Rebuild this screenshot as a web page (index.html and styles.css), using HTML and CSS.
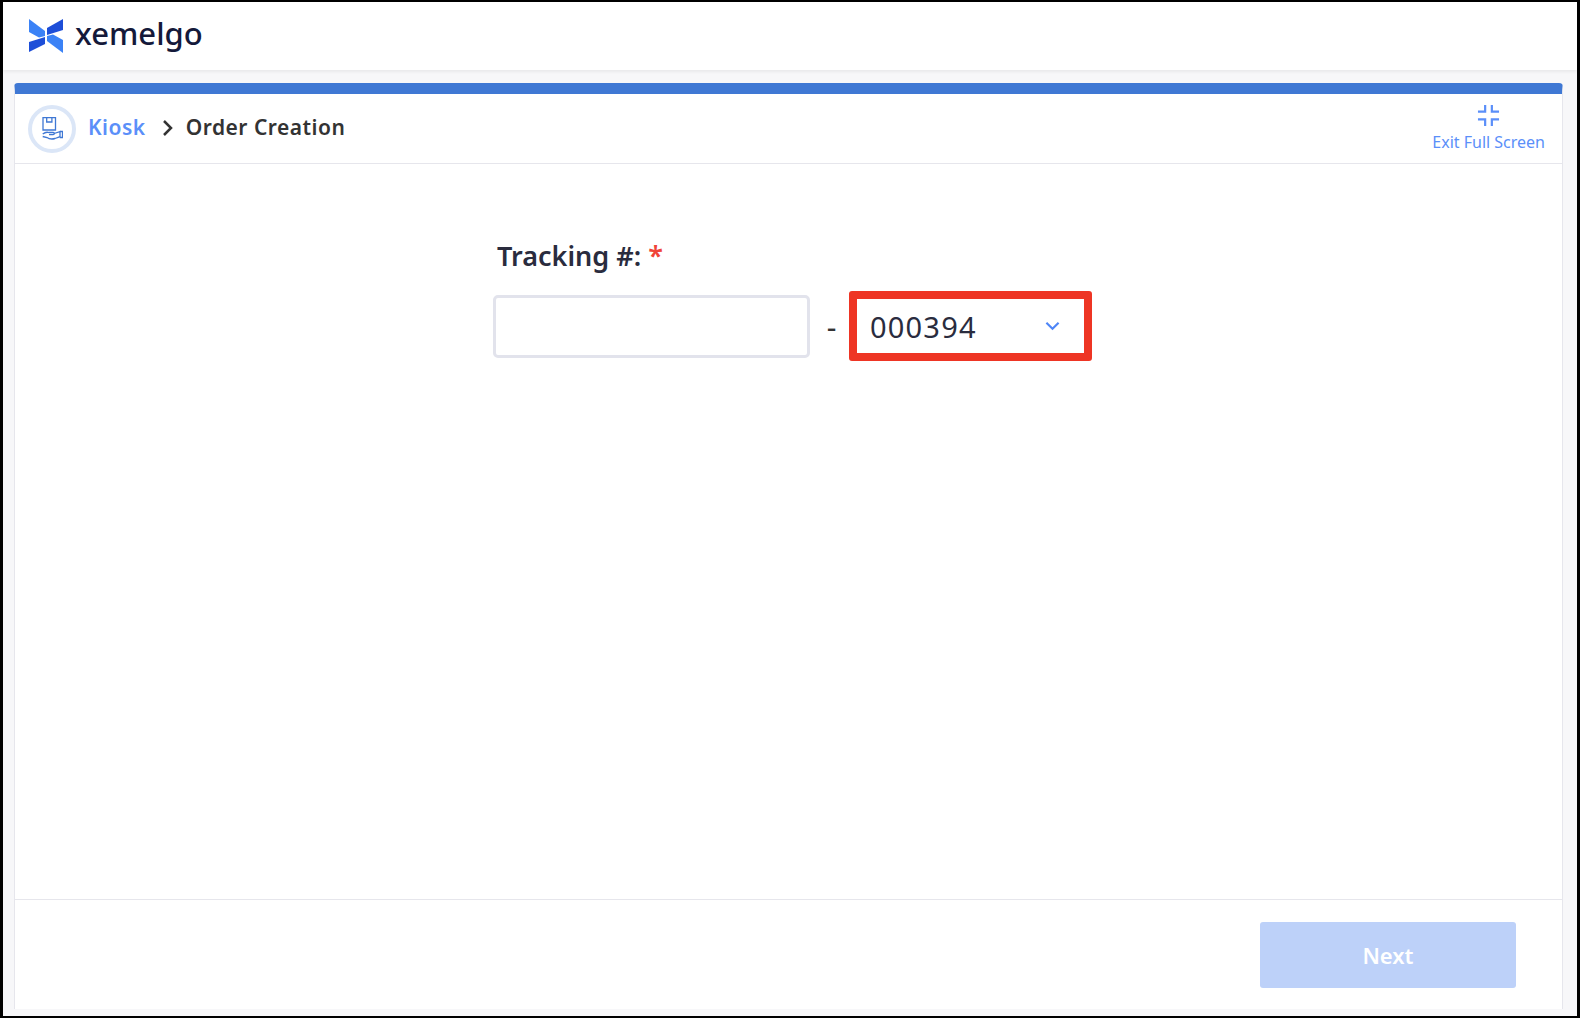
FILE: index.html
```html
<!DOCTYPE html>
<html lang="en">
<head>
    <meta charset="UTF-8">
    <title>Kiosk - Order Creation</title>
    <link rel="stylesheet" href="styles.css">
</head>
<body>

    <header class="topbar">
        <svg class="logo" viewBox="0 0 34 34">
            <polygon points="0,0 16,12 16,17 10,18.500 0,13" fill="#3b82f6"/>
            <polygon points="0,23 16,18 16,25 0,33" fill="#1d4ed8"/>
            <polygon points="34,0 34,11 18,16 18,9" fill="#1d4ed8"/>
            <polygon points="34,34 18,22 18,17 24,15.500 34,21" fill="#3b82f6"/>
        </svg>
        <span class="brand">xemelgo</span>
    </header>

    <main class="page">
        <div class="card">
            <div class="breadcrumb-row">
                <div class="kiosk-icon">
                    <svg viewBox="0 0 21 23" fill="none" stroke="#3f78d4" stroke-width="1.300">
                        <path d="M1 13V.7h12.500V13z"/>
                        <path d="M4.700.7v4.300h5.200V.7"/>
                        <path d="M.7 17c2-1.500 4-2.200 6-1.500h4.500c1.500 0 1.500 2.200 0 2.200H7"/>
                        <path d="M12 16.500l6-1.800v5l-5 1.800c-3 .8-6 .5-8-1L.7 19.500"/>
                        <path d="M17.800 14.500h2.700v6h-2.700"/>
                    </svg>
                </div>
                <a class="crumb-link">Kiosk</a>
                <svg class="crumb-sep" viewBox="0 0 12 18" fill="none" stroke="#333" stroke-width="2.500">
                    <path d="M2 2l7 7-7 7"/>
                </svg>
                <span class="crumb-current">Order Creation</span>
                <a class="exit-full">
                    <svg viewBox="0 0 24 24" fill="none" stroke="#5b8ff9" stroke-width="2.300">
                        <path d="M8.500 1v7H1"/>
                        <path d="M15.500 1v7H23"/>
                        <path d="M1 16h7.500v7"/>
                        <path d="M23 16h-7.500v7"/>
                    </svg>
                    <span>Exit Full Screen</span>
                </a>
            </div>

            <div class="content">
                <label class="field-label">Tracking #: <span class="required">*</span></label>
                <div class="field-row">
                    <input class="text-input" type="text">
                    <span class="dash">-</span>
                    <div class="dropdown">
                        <span>000394</span>
                        <svg viewBox="0 0 16 10" fill="none" stroke="#4f86f7" stroke-width="2.300">
                            <path d="M1.500 1.500L8 8l6.500-6.500"/>
                        </svg>
                    </div>
                </div>
            </div>

            <div class="footer">
                <button class="next-btn" disabled>Next</button>
            </div>
        </div>
    </main>

</body>
</html>
```

FILE: styles.css
```css
* {
    box-sizing: border-box;
}

html, body {
    height: 100%;
}

body {
    font-family: 'Noto Sans', 'Lato', sans-serif;
    background-color: #f7f7f9;
    margin: 0;
    height: 1018px;
    border: solid #000;
    border-width: 2px 3px;
    display: flex;
    flex-direction: column;
    overflow: hidden;
}

.topbar {
    height: 68px;
    background-color: #fff;
    display: flex;
    align-items: center;
    padding-left: 26px;
    box-shadow: 0 2px 3px rgba(0, 0, 0, 0.06);
}

.logo {
    width: 34px;
    height: 34px;
}

.brand {
    font-size: 31px;
    font-weight: 500;
    color: #14193a;
    margin-left: 12px;
    margin-top: -6px;
}

.page {
    flex: 1;
    display: flex;
    padding: 13px 14px 7px 11px;
}

.card {
    flex: 1;
    display: flex;
    flex-direction: column;
    background-color: #fff;
    border: 1px solid #e6e6ec;
    border-top: 11px solid #3f78d4;
    border-bottom: none;
    border-radius: 4px 4px 0 0;
}

.breadcrumb-row {
    height: 70px;
    display: flex;
    align-items: center;
    padding: 0 17px 0 13px;
    border-bottom: 1px solid #e6e6ec;
}

.kiosk-icon {
    width: 48px;
    height: 48px;
    border-radius: 50%;
    border: 4px solid #dbe6f7;
    display: flex;
    align-items: center;
    justify-content: center;
}

.kiosk-icon svg {
    width: 21px;
    height: 23px;
}

.crumb-link {
    font-size: 21px;
    font-weight: 600;
    color: #5b8ff9;
    margin: 0 0 4px 12px;
    letter-spacing: 0.5px;
}

.crumb-sep {
    width: 12px;
    height: 18px;
    margin: 0 12px 2px 16px;
}

.crumb-current {
    font-size: 21px;
    font-weight: 600;
    color: #333;
    margin-bottom: 4px;
    letter-spacing: 0.5px;
}

.exit-full {
    margin-left: auto;
    display: flex;
    flex-direction: column;
    align-items: center;
    font-size: 16px;
    color: #5b8ff9;
}

.exit-full svg {
    width: 23px;
    height: 23px;
    margin-bottom: 4px;
}

.content {
    flex: 1;
    padding: 73px 0 0 478px;
}

.field-label {
    display: block;
    font-size: 27px;
    font-weight: 600;
    color: #2a2c3e;
    margin-left: 4px;
}

.required {
    color: #f04438;
}

.field-row {
    display: flex;
    align-items: center;
    margin-top: 17px;
}

.text-input {
    width: 317px;
    height: 63px;
    border: 3px solid #e2e3ec;
    border-radius: 5px;
    background-color: #fff;
}

.dash {
    font-size: 30px;
    color: #333;
    width: 39px;
    padding-left: 4px;
    text-align: center;
}

.dropdown {
    width: 243px;
    height: 70px;
    border: 8px solid #ee3524;
    border-radius: 3px;
    display: flex;
    align-items: center;
    justify-content: space-between;
    padding: 0 24px 0 13px;
    font-size: 29px;
    letter-spacing: 1.200px;
    color: #2a2c3e;
}

.dropdown svg {
    width: 15px;
    height: 10px;
}

.footer {
    height: 110px;
    border-top: 1px solid #e6e6ec;
    display: flex;
    justify-content: flex-end;
    align-items: flex-start;
    padding: 22px 46px 0 0;
}

.next-btn {
    width: 256px;
    height: 66px;
    border: none;
    border-radius: 3px;
    background-color: #bdd1f9;
    color: #fff;
    font-family: inherit;
    font-size: 22px;
    font-weight: 600;
}
```
